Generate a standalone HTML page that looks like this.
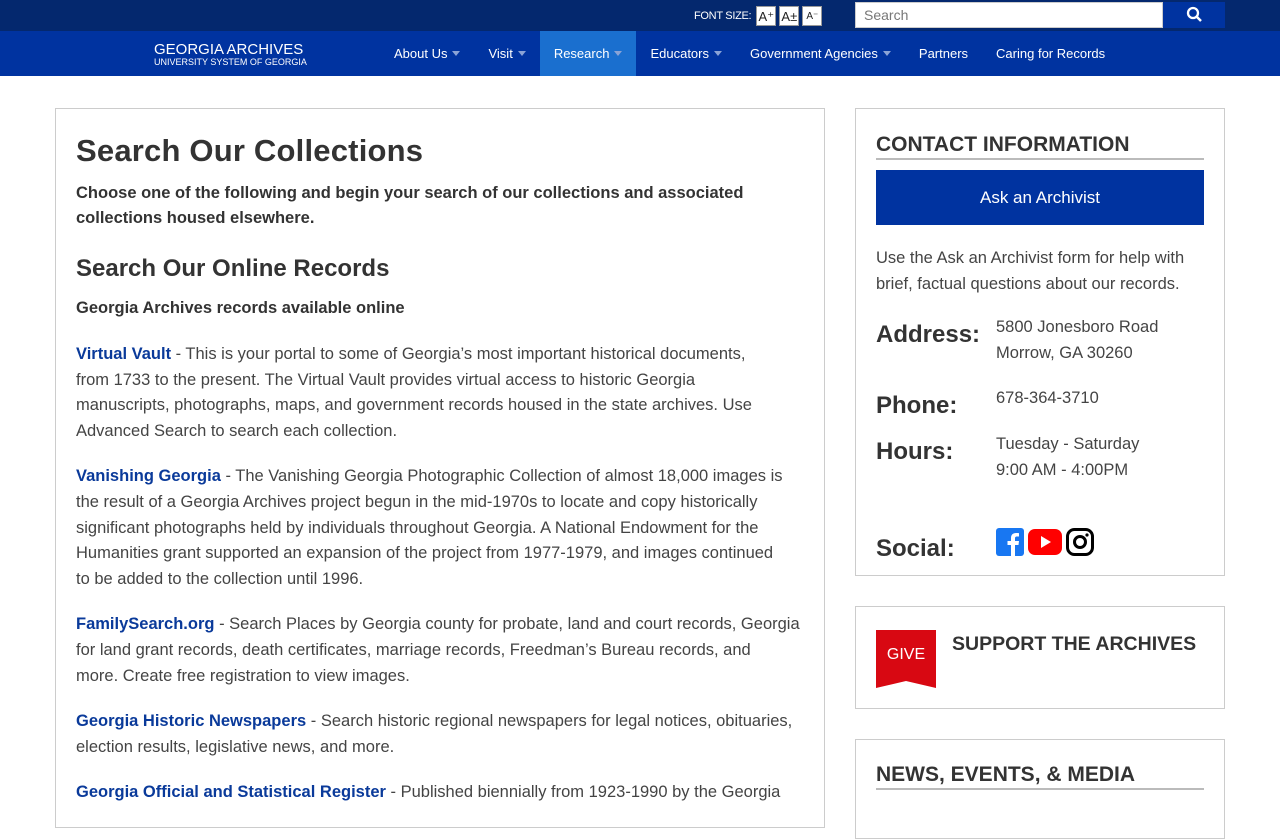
<!DOCTYPE html>
<html><head><meta charset="utf-8"><style>
*{box-sizing:border-box;margin:0;padding:0}
body{width:1280px;height:800px;overflow:hidden;background:#fff;font-family:"Liberation Sans",sans-serif;color:#333}
.top{height:31px;background:#04286e;position:relative}
.fs{position:absolute;left:694px;top:6px;color:#fff;font-size:11px;display:flex;align-items:center;gap:3px}
.fs b{font-weight:normal;margin-right:2px;letter-spacing:-.3px}
.fs span{display:inline-block;width:20px;height:20px;background:#fff;color:#222;font-size:13px;text-align:center;line-height:19px;border:1px solid #999}
.search{position:absolute;left:855px;top:2px;width:308px;height:26px;background:#fff;border:1px solid #ccc;font-size:14px;color:#777;padding:4px 8px}
.sbtn{position:absolute;left:1163px;top:2px;width:62px;height:26px;background:#0033a0}
.nav{height:45px;background:#0033a0;position:relative;color:#fff}
.logo{position:absolute;left:154px;top:11px;line-height:1}
.logo .a{font-size:15px}.logo .b{font-size:9px;margin-top:1px}
.nav ul{list-style:none;position:absolute;left:380px;top:0;display:flex;height:45px}
.nav li{padding:0 14px;font-size:13px;line-height:45px}
.nav li.act{background:#1a6fcf}
.car{display:inline-block;border-left:4.5px solid transparent;border-right:4.5px solid transparent;border-top:5px solid #8aa3d6;margin-left:5px;vertical-align:2px}
.main{position:absolute;left:55px;top:108px;width:770px;height:720px;border:1px solid #ccc;padding:0 20px}
h1{font-size:31px;margin-top:24px;color:#333;letter-spacing:.2px}
.lead{font-weight:bold;font-size:16.5px;line-height:25px;margin-top:12px}
h2{font-size:24px;margin-top:24px;font-weight:bold}
.sub{font-weight:bold;font-size:16.5px;margin-top:16px}
p{font-size:16.5px;line-height:25.6px;margin-top:20px;color:#444;white-space:nowrap}
p a{color:#0a3a9a;font-weight:bold;text-decoration:none}
.side{position:absolute;left:855px;width:370px;border:1px solid #ccc;padding:0 20px}
.s1{top:108px;height:468px}
.side h3{font-size:21px;font-weight:bold;color:#333;border-bottom:2px solid #bbb;padding-bottom:1px}
.btn{margin-top:10px;height:55px;background:#0033a0;color:#fff;text-align:center;line-height:55px;font-size:17px}
.row{position:absolute;left:20px;font-size:24px;font-weight:bold}
.val{position:absolute;left:140px;font-size:16.5px;line-height:25.6px;color:#444}
.s2{top:606px;height:103px}
.give{position:absolute;left:20px;top:23px;width:60px;height:58px;background:#d80812;color:#fff;font-size:16px;text-align:center;line-height:50px;clip-path:polygon(0 0,100% 0,100% 100%,50% 88%,0 100%)}
.s3{top:739px;height:100px}
</style></head><body>
<div class="top">
<div class="fs"><b>FONT SIZE:</b><span>A⁺</span><span>A±</span><span style="font-size:10px">A⁻</span></div>
<div class="search">Search</div>
<div class="sbtn"><svg width="62" height="26"><circle cx="30" cy="11" r="5" stroke="#fff" stroke-width="2.3" fill="none"/><line x1="34" y1="15" x2="38" y2="19" stroke="#fff" stroke-width="2.5"/></svg></div>
</div>
<div class="nav">
<div class="logo"><div class="a">GEORGIA ARCHIVES</div><div class="b">UNIVERSITY SYSTEM OF GEORGIA</div></div>
<ul><li>About Us<i class="car"></i></li><li>Visit<i class="car"></i></li><li class="act">Research<i class="car"></i></li><li>Educators<i class="car"></i></li><li>Government Agencies<i class="car"></i></li><li>Partners</li><li>Caring for Records</li></ul>
</div>
<div class="main">
<h1>Search Our Collections</h1>
<div class="lead">Choose one of the following and begin your search of our collections and associated collections housed elsewhere.</div>
<h2>Search Our Online Records</h2>
<div class="sub">Georgia Archives records available online</div>
<p style="margin-top:24px"><a>Virtual Vault</a> - This is your portal to some of Georgia’s most important historical documents,<br>from 1733 to the present. The Virtual Vault provides virtual access to historic Georgia<br>manuscripts, photographs, maps, and government records housed in the state archives. Use<br>Advanced Search to search each collection.</p>
<p><a>Vanishing Georgia</a> - The Vanishing Georgia Photographic Collection of almost 18,000 images is<br>the result of a Georgia Archives project begun in the mid-1970s to locate and copy historically<br>significant photographs held by individuals throughout Georgia. A National Endowment for the<br>Humanities grant supported an expansion of the project from 1977-1979, and images continued<br>to be added to the collection until 1996.</p>
<p><a>FamilySearch.org</a> - Search Places by Georgia county for probate, land and court records, Georgia<br>for land grant records, death certificates, marriage records, Freedman’s Bureau records, and<br>more. Create free registration to view images.</p>
<p><a>Georgia Historic Newspapers</a> - Search historic regional newspapers for legal notices, obituaries,<br>election results, legislative news, and more.</p>
<p><a>Georgia Official and Statistical Register</a> - Published biennially from 1923-1990 by the Georgia</p>
</div>
<div class="side s1">
<h3 style="margin-top:24px">CONTACT INFORMATION</h3>
<div class="btn">Ask an Archivist</div>
<p style="margin-top:21px;white-space:normal">Use the Ask an Archivist form for help with brief, factual questions about our records.</p>
<div class="row" style="top:212px">Address:</div><div class="val" style="top:206px">5800 Jonesboro Road<br>Morrow, GA 30260</div>
<div class="row" style="top:283px">Phone:</div><div class="val" style="top:277px">678-364-3710</div>
<div class="row" style="top:329px">Hours:</div><div class="val" style="top:323px">Tuesday - Saturday<br>9:00 AM - 4:00PM</div>
<div class="row" style="top:426px">Social:</div>
<div style="position:absolute;left:140px;top:419px;display:flex;gap:4px">
<svg width="28" height="28"><rect width="28" height="28" rx="3" fill="#1877f2"/><path d="M19 28V17h3.5l.5-4h-4v-2.5c0-1.2.4-2 2-2h2V5.1c-.4 0-1.6-.1-3-.1-3 0-5 1.8-5 5.1V13h-3.5v4H15v11z" fill="#fff"/></svg>
<svg width="34" height="28"><rect y="1" width="34" height="26" rx="7" fill="#f00"/><path d="M13 8v12l10-6z" fill="#fff"/></svg>
<svg width="28" height="28"><rect x="1.5" y="1.5" width="25" height="25" rx="7" fill="none" stroke="#000" stroke-width="3"/><circle cx="14" cy="14" r="5.5" fill="none" stroke="#000" stroke-width="3"/><circle cx="21" cy="7" r="1.6"/></svg>
</div>
</div>
<div class="side s2"><div class="give">GIVE</div><div style="position:absolute;left:96px;top:26px;font-size:19.5px;font-weight:bold">SUPPORT THE ARCHIVES</div></div>
<div class="side s3"><h3 style="margin-top:23px">NEWS, EVENTS, &amp; MEDIA</h3></div>
</body></html>
